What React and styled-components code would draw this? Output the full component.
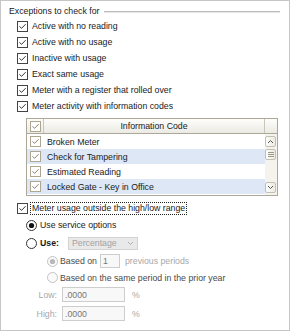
import React from 'react';
import styled, { createGlobalStyle } from 'styled-components';

const Global = createGlobalStyle`
  html, body { margin: 0; padding: 0; background: #fff; }
  body {
    font-family: "Liberation Sans", Arial, sans-serif;
    font-size: 8.75px;
    color: #1a1a1a;
  }
`;

const Frame = styled.div`
  box-sizing: border-box;
  width: 290px;
  height: 331px;
  border: 1px solid #c6c6c6;
  background: #fff;
  display: flex;
  flex-direction: column;
  padding-top: 3px;
`;

const GroupHeader = styled.div`
  display: flex;
  align-items: center;
  height: 14px;
  padding: 0 9px 0 8px;
  gap: 5px;
`;

const GroupTitle = styled.span`
  white-space: nowrap;
`;

const GroupLine = styled.div`
  flex: 1;
  height: 0;
  margin-top: 2px;
  border-top: 1px solid #bcbcbc;
  border-bottom: 1px solid #e6e6e6;
`;

const Row = styled.div`
  display: flex;
  align-items: center;
  height: ${(p) => p.$h || 16}px;
  padding-left: ${(p) => p.$indent}px;
  gap: ${(p) => (p.$gap ?? 4)}px;
  white-space: nowrap;
  margin-top: ${(p) => p.$mt || 0}px;
`;

const Text = styled.span`
  color: ${(p) => p.$color || '#1a1a1a'};
  font-weight: ${(p) => (p.$bold ? 700 : 400)};
  margin-left: ${(p) => p.$ml || 0}px;
`;

const FocusText = styled.span`
  border: 1px dotted #222;
  padding: 0 1px;
  margin-left: -2px;
  line-height: 11px;
`;

const Grid = styled.div`
  box-sizing: border-box;
  margin: 4px 0 0 25px;
  width: 252px;
  height: 78px;
  border: 1px solid #aca899;
  display: flex;
  flex-direction: column;
  background: #fff;
`;

const HeadRow = styled.div`
  display: flex;
  height: 15px;
  box-sizing: border-box;
  border-bottom: 1px solid #aca899;
  background: linear-gradient(#fdfdfb, #ebeae4);
`;

const HeadCheckCell = styled.div`
  width: 17px;
  box-sizing: border-box;
  border-right: 1px solid #c9c6b9;
  display: flex;
  align-items: center;
  justify-content: center;
`;

const HeadTitle = styled.div`
  flex: 1;
  text-align: center;
  line-height: 14px;
`;

const HeadCorner = styled.div`
  width: 13px;
  box-sizing: border-box;
  border-left: 1px solid #c9c6b9;
  border-top-right-radius: 3px;
`;

const GridBody = styled.div`
  flex: 1;
  display: flex;
`;

const GridRows = styled.div`
  flex: 1;
  display: flex;
  flex-direction: column;
`;

const GridRow = styled.div`
  display: flex;
  align-items: center;
  height: 15px;
  background: ${(p) => (p.$hl ? '#dde7f5' : '#fff')};
`;

const RowCheckCell = styled.div`
  width: 17px;
  display: flex;
  align-items: center;
  justify-content: center;
`;

const RowText = styled.div`
  padding-left: 3px;
`;

const ScrollBar = styled.div`
  width: 12px;
  box-sizing: border-box;
  display: flex;
  flex-direction: column;
  gap: 2px;
  padding: 2px 1px 2px 0;
  background: #f4f3ee;
`;

const ScrollButton = styled.div`
  box-sizing: border-box;
  height: 11px;
  border: 1px solid #c3c0b2;
  border-radius: 2px;
  background: linear-gradient(90deg, #fdfdfb, #ecebe3);
  display: flex;
  align-items: center;
  justify-content: center;
  margin-top: ${(p) => (p.$end ? 'auto' : '0')};
`;

const Select = styled.div`
  box-sizing: border-box;
  width: 70px;
  height: 13px;
  margin-left: 6px;
  border: 1px solid #d3d3d3;
  background: #e9e9e9;
  color: #a2a2a2;
  display: flex;
  align-items: center;
  justify-content: space-between;
  padding: 0 3px 0 3px;
`;

const Field = styled.div`
  box-sizing: border-box;
  width: ${(p) => p.$w}px;
  height: ${(p) => p.$h}px;
  margin-left: ${(p) => p.$ml}px;
  border: 1px solid #cdcdcd;
  background: #f8f8f8;
  color: #777;
  padding-left: 2px;
  display: flex;
  align-items: center;
`;

const SideLabel = styled.span`
  width: 31px;
  margin-left: 25px;
  text-align: right;
  color: #a8a8a8;
`;

const CheckBox = ({ color = '#444', check = '#333', size = 11 }) => (
  <svg width={size} height={size} viewBox="0 0 11 11">
    <rect x="0.5" y="0.5" width="10" height="10" fill="#fff" stroke={color} />
    <path d="M2.5 5.3 L4.5 7.4 L8.6 3.2" fill="none" stroke={check} strokeWidth="1" />
  </svg>
);

const Radio = ({ checked, disabled }) => {
  const stroke = disabled ? '#c2c2c2' : '#333';
  const dot = disabled ? '#b8b8b8' : '#111';
  return (
    <svg width="11" height="11" viewBox="0 0 11 11">
      <circle cx="5.5" cy="5.5" r="5" fill={disabled ? '#fafafa' : '#fff'} stroke={stroke} />
      {checked && <circle cx="5.5" cy="5.5" r="2.6" fill={dot} />}
    </svg>
  );
};

const Chevron = ({ up, color = '#555' }) => (
  <svg width="7" height="5" viewBox="0 0 7 5">
    <polyline
      points={up ? '1,4 3.5,1.5 6,4' : '1,1 3.5,3.5 6,1'}
      fill="none"
      stroke={color}
      strokeWidth="1"
    />
  </svg>
);

const Grip = () => (
  <svg width="6" height="5" viewBox="0 0 6 5">
    <path d="M0 0.5 H6 M0 2.5 H6 M0 4.5 H6" stroke="#9a9888" strokeWidth="1" />
  </svg>
);

const checks = [
  'Active with no reading',
  'Active with no usage',
  'Inactive with usage',
  'Exact same usage',
  'Meter with a register that rolled over',
  'Meter activity with information codes',
];

const codes = [
  { name: 'Broken Meter', hl: false },
  { name: 'Check for Tampering', hl: true },
  { name: 'Estimated Reading', hl: false },
  { name: 'Locked Gate - Key in Office', hl: true },
];

export default function App() {
  return (
    <>
      <Global />
      <Frame>
        <GroupHeader>
          <GroupTitle>Exceptions to check for</GroupTitle>
          <GroupLine />
        </GroupHeader>

        {checks.map((c) => (
          <Row key={c} $indent={16}>
            <CheckBox />
            <Text>{c}</Text>
          </Row>
        ))}

        <Grid>
          <HeadRow>
            <HeadCheckCell>
              <CheckBox color="#aea690" check="#8c836c" />
            </HeadCheckCell>
            <HeadTitle>Information Code</HeadTitle>
            <HeadCorner />
          </HeadRow>
          <GridBody>
            <GridRows>
              {codes.map((c) => (
                <GridRow key={c.name} $hl={c.hl}>
                  <RowCheckCell>
                    <CheckBox color="#aea690" check="#8c836c" />
                  </RowCheckCell>
                  <RowText>{c.name}</RowText>
                </GridRow>
              ))}
            </GridRows>
            <ScrollBar>
              <ScrollButton>
                <Chevron up />
              </ScrollButton>
              <ScrollButton>
                <Grip />
              </ScrollButton>
              <ScrollButton $end>
                <Chevron />
              </ScrollButton>
            </ScrollBar>
          </GridBody>
        </Grid>

        <Row $indent={16} $mt={4}>
          <CheckBox />
          <FocusText>Meter usage outside the high/low range</FocusText>
        </Row>

        <Row $indent={25} $h={18} $gap={3}>
          <Radio checked />
          <Text>Use service options</Text>
        </Row>
        <Row $indent={25} $h={18} $gap={3}>
          <Radio />
          <Text $bold>Use:</Text>
          <Select>
            <span>Percentage</span>
            <Chevron color="#b0b0b0" />
          </Select>
        </Row>
        <Row $indent={46} $h={18} $gap={2}>
          <Radio checked disabled />
          <Text $color="#4a4a4a">Based on</Text>
          <Field $w={20} $h={14} $ml={1}>1</Field>
          <Text $color="#a8a8a8" $ml={3}>previous periods</Text>
        </Row>
        <Row $indent={46} $h={15} $gap={2}>
          <Radio disabled />
          <Text $color="#4a4a4a">Based on the same period in the prior year</Text>
        </Row>
        <Row $indent={0} $h={19} $gap={0}>
          <SideLabel>Low:</SideLabel>
          <Field $w={63} $h={15} $ml={5}>.0000</Field>
          <Text $color="#a8a8a8" $ml={7}>%</Text>
        </Row>
        <Row $indent={0} $h={19} $gap={0}>
          <SideLabel>High:</SideLabel>
          <Field $w={63} $h={15} $ml={5}>.0000</Field>
          <Text $color="#a8a8a8" $ml={7}>%</Text>
        </Row>
      </Frame>
    </>
  );
}
